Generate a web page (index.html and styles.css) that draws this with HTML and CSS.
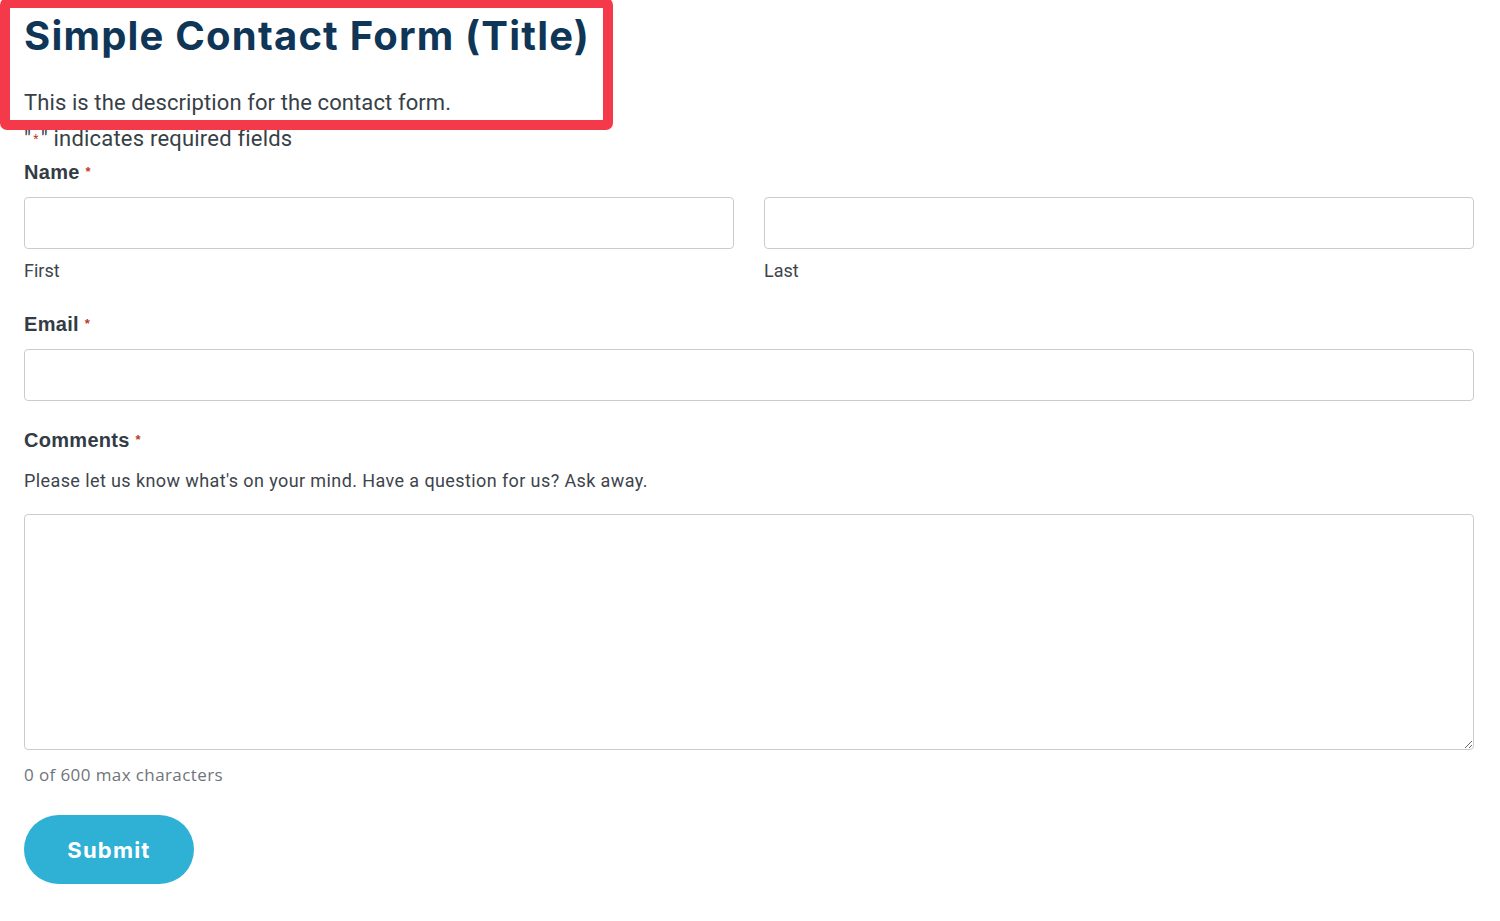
FILE: index.html
```html
<!DOCTYPE html>
<html lang="en">
<head>
<meta charset="utf-8">
<title>Simple Contact Form</title>
<link rel="stylesheet" href="styles.css">
</head>
<body>
<div class="page">
  <div class="highlight"></div>
  <header class="form-header">
    <h1 class="form-title">Simple Contact Form (Title)</h1>
    <p class="form-desc">This is the description for the contact form.</p>
  </header>
  <p class="required-note">"<span class="req">*</span>" indicates required fields</p>
  <form class="form">
    <div class="field">
      <div class="label">Name <span class="req">*</span></div>
      <div class="name-row">
        <div class="sub">
          <input class="input" type="text">
          <div class="sublabel">First</div>
        </div>
        <div class="sub">
          <input class="input" type="text">
          <div class="sublabel">Last</div>
        </div>
      </div>
    </div>
    <div class="field field-email">
      <div class="label">Email <span class="req">*</span></div>
      <input class="input" type="email">
    </div>
    <div class="field field-comments">
      <div class="label">Comments <span class="req">*</span></div>
      <div class="help">Please let us know what's on your mind. Have a question for us? Ask away.</div>
      <textarea class="textarea"></textarea>
      <div class="counter">0 of 600 max characters</div>
    </div>
    <button class="submit" type="button">Submit</button>
  </form>
</div>
</body>
</html>
```
FILE: styles.css
```css
* { box-sizing: border-box; }
html, body { margin: 0; padding: 0; background: #ffffff; }
body {
  font-family: Roboto, "Liberation Sans", Arial, sans-serif;
  color: #383f47;
}
.page {
  position: relative;
  padding: 12px 26px 40px 24px;
}
.highlight {
  position: absolute;
  left: 0;
  top: -2px;
  width: 613px;
  height: 132px;
  border: 10px solid #f43a4a;
  border-radius: 7px;
  pointer-events: none;
}
.form-title {
  margin: 0;
  font-family: Inter, "DejaVu Sans", sans-serif;
  font-weight: 700;
  font-size: 40px;
  line-height: 48px;
  color: #0f3557;
  letter-spacing: 1.2px;
}
.form-desc {
  margin: 28px 0 0 0;
  font-size: 22px;
  letter-spacing: 0.1px;
  line-height: 30px;
  color: #383f47;
}
.required-note {
  margin: 9px 0 0 0;
  font-size: 22px;
  letter-spacing: 0.2px;
  line-height: 24px;
  color: #383f47;
}
.req {
  color: #c0392b;
}
.required-note .req { font-size: 12px; vertical-align: 3px; padding: 0 2px; }
.form { margin: 9px 0 0 0; }
.label {
  font-family: "Liberation Sans", Arial, sans-serif;
  font-size: 20px;
  letter-spacing: 0.3px;
  font-weight: 700;
  line-height: 24px;
  color: #333b44;
}
.label .req { font-size: 13px; vertical-align: 3px; }
.name-row {
  margin-top: 13px;
  display: grid;
  grid-template-columns: 1fr 1fr;
  column-gap: 30px;
}
.input {
  display: block;
  width: 100%;
  height: 52px;
  border: 1px solid #c8ccd1;
  border-radius: 4px;
  background: #fff;
  margin: 0;
  padding: 0 12px;
  font: inherit;
}
.sublabel {
  margin-top: 11px;
  font-size: 18px;
  line-height: 22px;
  color: #3d444c;
}
.field-email { margin-top: 30px; }
.field-email .input { margin-top: 13px; }
.field-comments { margin-top: 27px; }
.help {
  margin-top: 18px;
  font-size: 18px;
  letter-spacing: 0.4px;
  line-height: 22px;
  color: #3d444c;
}
.textarea {
  display: block;
  width: 100%;
  height: 236px;
  margin-top: 22px;
  border: 1px solid #c8ccd1;
  border-radius: 4px;
  resize: vertical;
  font: inherit;
  padding: 12px;
}
.counter {
  margin-top: 14px;
  font-family: "Open Sans", "DejaVu Sans", sans-serif;
  font-size: 17px;
  letter-spacing: 0.4px;
  line-height: 22px;
  color: #6f7479;
}
.submit {
  display: block;
  margin-top: 29px;
  width: 170px;
  height: 69px;
  border: none;
  border-radius: 35px;
  background: #2fb1d6;
  color: #ffffff;
  font-family: Inter, "DejaVu Sans", sans-serif;
  font-weight: 700;
  font-size: 22px;
  letter-spacing: 1.2px;
  cursor: pointer;
}
```
